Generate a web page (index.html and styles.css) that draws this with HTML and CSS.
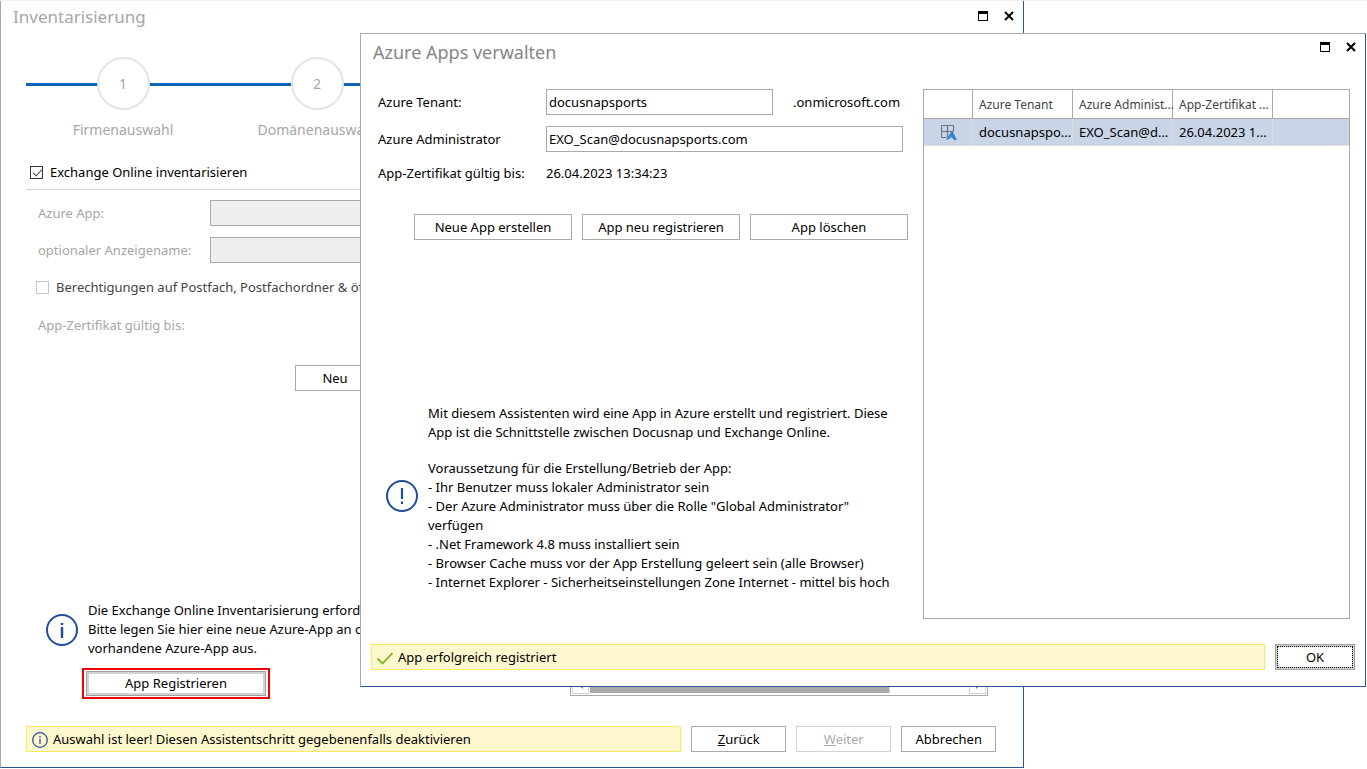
FILE: index.html
```html
<!DOCTYPE html>
<html lang="de">
<head>
<meta charset="utf-8">
<title>Inventarisierung</title>
<link rel="stylesheet" href="styles.css">
</head>
<body>
<main class="desktop">
  <section class="window wizard">
    <header class="titlebar">
      <h1 class="title title-inactive">Inventarisierung</h1>
      <button class="winbtn" aria-label="Maximieren"><svg width="10" height="10" viewBox="0 0 10 10" shape-rendering="crispEdges"><path d="M0 0h10v10H0zM1 3v6h8V3z" fill="#000" fill-rule="evenodd"/></svg></button>
      <button class="winbtn" aria-label="Schließen"><svg width="10" height="10" viewBox="0 0 10 10"><path d="M1 1l8 8M9 1l-8 8" stroke="#000" stroke-width="2"/></svg></button>
    </header>
    <div class="wizard-body">
      <ol class="steps">
        <li class="step"><span class="circle">1</span><span class="step-label">Firmenauswahl</span></li>
        <li class="step"><span class="circle">2</span><span class="step-label">Domänenauswahl</span></li>
      </ol>
      <label class="check main-check"><input type="checkbox" class="box" checked>Exchange Online inventarisieren</label>
      <div class="columns">
        <div class="left">
          <div class="field"><label class="muted" for="app">Azure App:</label><input id="app" class="text" disabled></div>
          <div class="field"><label class="muted" for="name">optionaler Anzeigename:</label><input id="name" class="text" disabled></div>
          <label class="check sub-check"><input type="checkbox" class="box box-light">Berechtigungen auf Postfach, Postfachordner &amp; öffentliche</label>
          <p class="muted cert">App-Zertifikat gültig bis:</p>
          <button class="btn new">Neu</button>
          <div class="notice">
            <svg class="notice-icon" width="32" height="32" viewBox="0 0 32 32"><circle cx="16" cy="16" r="15" fill="none" stroke="#1f4e9c" stroke-width="2"/><path d="M16 13v11M16 9v2" stroke="#1f4e9c" stroke-width="2.4"/></svg>
            <p class="notice-text">Die Exchange Online Inventarisierung erfordert<br>Bitte legen Sie hier eine neue Azure-App an oder<br>vorhandene Azure-App aus.</p>
          </div>
          <div class="marker"><button class="btn btn-default">App Registrieren</button></div>
        </div>
        <div class="panel">
          <div class="scrollbar">
            <span class="arrow"><svg width="6" height="8" viewBox="0 0 6 8"><path d="M5 0v8L0 4z" fill="#8a8a8a"/></svg></span>
            <span class="track"><span class="thumb"></span></span>
            <span class="arrow"><svg width="6" height="8" viewBox="0 0 6 8"><path d="M1 0v8l5-4z" fill="#8a8a8a"/></svg></span>
          </div>
        </div>
      </div>
      <footer class="footer">
        <p class="status"><svg width="16" height="16" viewBox="0 0 16 16"><circle cx="8" cy="8" r="7.3" fill="none" stroke="#2b579a" stroke-width="1.3"/><path d="M8 6.5V12M8 4v1.4" stroke="#2b579a" stroke-width="1.3"/></svg>Auswahl ist leer! Diesen Assistentschritt gegebenenfalls deaktivieren</p>
        <button class="btn nav"><u>Z</u>urück</button>
        <button class="btn nav" disabled><u>W</u>eiter</button>
        <button class="btn nav">Abbrechen</button>
      </footer>
    </div>
  </section>

  <section class="window dialog">
    <header class="titlebar">
      <h2 class="title">Azure Apps verwalten</h2>
      <button class="winbtn" aria-label="Maximieren"><svg width="10" height="10" viewBox="0 0 10 10" shape-rendering="crispEdges"><path d="M0 0h10v10H0zM1 3v6h8V3z" fill="#000" fill-rule="evenodd"/></svg></button>
      <button class="winbtn" aria-label="Schließen"><svg width="10" height="10" viewBox="0 0 10 10"><path d="M1 1l8 8M9 1l-8 8" stroke="#000" stroke-width="2"/></svg></button>
    </header>
    <div class="dialog-body">
      <div class="form">
        <div class="field"><label for="tenant">Azure Tenant:</label><input id="tenant" class="text tenant" value="docusnapsports"><span class="suffix">.onmicrosoft.com</span></div>
        <div class="field"><label for="admin">Azure Administrator</label><input id="admin" class="text admin" value="EXO_Scan@docusnapsports.com"></div>
        <div class="field"><span class="name">App-Zertifikat gültig bis:</span><span>26.04.2023 13:34:23</span></div>
        <div class="actions">
          <button class="btn">Neue App erstellen</button>
          <button class="btn">App neu registrieren</button>
          <button class="btn">App löschen</button>
        </div>
        <div class="info">
          <svg class="info-icon" width="32" height="32" viewBox="0 0 32 32"><circle cx="16" cy="16" r="15" fill="none" stroke="#1f4e9c" stroke-width="2"/><path d="M16 8v11M16 21.500v2.500" stroke="#1f4e9c" stroke-width="2.200"/></svg>
          <div class="info-text">
            <p>Mit diesem Assistenten wird eine App in Azure erstellt und registriert. Diese<br>App ist die Schnittstelle zwischen Docusnap und Exchange Online.</p>
            <p>Voraussetzung für die Erstellung/Betrieb der App:<br>- Ihr Benutzer muss lokaler Administrator sein<br>- Der Azure Administrator muss über die Rolle "Global Administrator"<br>verfügen<br>- .Net Framework 4.8 muss installiert sein<br>- Browser Cache muss vor der App Erstellung geleert sein (alle Browser)<br>- Internet Explorer - Sicherheitseinstellungen Zone Internet - mittel bis hoch</p>
          </div>
        </div>
      </div>
      <div class="list">
        <table class="apps">
          <colgroup><col class="c-icon"><col class="c-data"><col class="c-data"><col class="c-data"><col></colgroup>
          <thead><tr><th></th><th>Azure Tenant</th><th title="Azure Administrator">Azure Administ...</th><th title="App-Zertifikat gültig bis">App-Zertifikat ...</th><th></th></tr></thead>
          <tbody><tr><td class="icon"><svg width="16" height="16" viewBox="0 0 16 16"><path d="M5.500 13.500h-5v-12h12v6M6.500 1.500v12M.5 7.500h12" fill="none" stroke="#6f7681" stroke-width="1.200"/><path d="M10 8h2l4 8h-3l-2.500-3-2.500 2-3 1z" fill="#2f86d0"/></svg></td><td title="docusnapsports">docusnapspo...</td><td title="EXO_Scan@docusnapsports.com">EXO_Scan@d...</td><td title="26.04.2023 13:34:23">26.04.2023 1...</td><td></td></tr></tbody>
        </table>
      </div>
    </div>
    <footer class="footer dialog-footer">
      <p class="status"><svg width="16" height="16" viewBox="0 0 16 16"><path d="M.5 8.500l5 5L15.500 3" fill="none" stroke="#7cb518" stroke-width="1.800"/></svg>App erfolgreich registriert</p>
      <button class="btn btn-default ok">OK</button>
    </footer>
  </section>
</main>
</body>
</html>
```
FILE: styles.css
```css
* { box-sizing: border-box; }
body, h1, h2, p, ol { margin: 0; padding: 0; }
body {
  font: 13px/19px "Noto Sans", "Open Sans", sans-serif;
  color: #000;
  background: #fff;
}
button, input { font: inherit; color: inherit; }
.desktop {
  position: relative;
  height: 100vh;
  overflow: hidden;
  border-top: 1px solid #f0f0f0;
}

/* Windows */
.window {
  position: absolute;
  display: flex;
  flex-direction: column;
  background: #fff;
  border: 1px solid #a9a9a9;
  border-right-color: #2b579a;
  border-bottom-color: #2b579a;
}
.wizard { left: 0; top: -1px; bottom: 1px; width: calc(75% - 1px); }
.dialog { left: 360px; top: 32px; right: 1px; bottom: 82px; }
.titlebar {
  display: flex;
  align-items: flex-start;
  gap: 16px;
  height: 30px;
  padding: 0 9px 0 12px;
}
.title {
  flex: 1;
  padding-top: 3px;
  font-size: 18px;
  font-weight: 400;
  line-height: 26px;
  color: #868686;
}
.title-inactive { font-size: 17px; color: #a6a6a6; }
.dialog .titlebar { height: 36px; padding-top: 2px; }
.winbtn {
  display: flex;
  margin-top: 10px;
  padding: 0;
  border: 0;
  background: none;
}
.dialog .winbtn { margin-top: 6px; }

/* Shared controls */
.btn {
  height: 26px;
  padding: 0;
  border: 1px solid #a9a9a9;
  background: #fff;
  text-align: center;
}
.btn:disabled { color: #ababab; border-color: #d2d2d2; }
.btn-default { border: 1px solid #a0a0a0; box-shadow: inset 0 0 0 2px #d2d2d2; }
.text {
  height: 26px;
  padding: 0 2px;
  border: 1px solid #a9a9a9;
  background: #fff;
}
.text:disabled { background: #efefef; }
.muted { color: #a6a6a6; }
.check { display: flex; align-items: center; gap: 7px; }
.box {
  appearance: none;
  width: 13px;
  height: 13px;
  margin: 0;
  border: 1px solid #333;
  background: #fff;
}
.box:checked::after {
  content: "";
  display: block;
  width: 4px;
  height: 8px;
  margin: 0 0 0 4px;
  border: solid #444;
  border-width: 0 1px 1px 0;
  transform: rotate(42deg);
}
.box-light { border-color: #c6c6c6; }
.footer { display: flex; gap: 10px; }
.status {
  flex: 1;
  display: flex;
  align-items: center;
  gap: 5px;
  height: 26px;
  padding: 1px 5px 0;
  border: 1px solid #ffe766;
  background: #fdf7cd;
}

/* Wizard */
.wizard-body {
  flex: 1;
  display: flex;
  flex-direction: column;
  padding: 26px 27px 15px 25px;
}
.steps {
  display: grid;
  grid-template-columns: repeat(5, 1fr);
  list-style: none;
  background: linear-gradient(#1064b5, #1064b5) 0 26px / 100% 3px no-repeat;
}
.step { display: flex; flex-direction: column; align-items: center; gap: 10px; }
.circle {
  display: grid;
  place-items: center;
  width: 53px;
  height: 53px;
  border: 2px solid #e4e4e4;
  border-radius: 50%;
  background: #fff;
  font-size: 14px;
  color: #a6a6a6;
}
.step-label { font-size: 14px; line-height: 20px; color: #a6a6a6; }
.main-check { padding: 23px 0 7px 4px; border-bottom: 1px solid #d8d8d8; }
.columns { flex: 1; display: flex; }
.left {
  flex: 1;
  display: flex;
  flex-direction: column;
  align-items: flex-start;
  min-width: 0;
  padding: 10px 0 0 12px;
}
.left .field {
  display: grid;
  grid-template-columns: 172px 300px;
  align-items: center;
  margin-bottom: 11px;
}
.sub-check { padding: 4px 0 0; margin-left: -2px; white-space: nowrap; color: #444; }
.cert { padding-top: 19px; }
.new { width: 80px; margin: 30px 0 0 257px; }
.notice { display: flex; align-items: center; gap: 10px; margin: auto 0 10px 8px; }
.notice-text { white-space: nowrap; }
.marker {
  display: flex;
  margin: 0 0 0 44px;
  padding: 1px 2px;
  border: 2px solid #f00000;
}
.marker .btn { width: 180px; height: 25px; }
.panel {
  display: flex;
  align-items: flex-end;
  width: 418px;
  margin: 10px 8px 3px 0;
  padding: 1px;
  border: 1px solid #a9a9a9;
}
.scrollbar { flex: 1; display: flex; height: 18px; }
.arrow {
  display: grid;
  place-items: center;
  width: 17px;
  border: 1px solid #d2d2d2;
}
.track { flex: 1; }
.thumb {
  display: block;
  width: 79%;
  height: 17px;
  margin-left: 1px;
  background: #a9a9a9;
  border-right: 1px solid #d2d2d2;
}
.wizard .footer { margin-top: 27px; }
.nav { width: 95px; }

/* Dialog */
.dialog-body {
  flex: 1;
  display: flex;
  gap: 15px;
  padding: 19px 15px 25px 17px;
}
.form { flex: 1; display: flex; flex-direction: column; min-width: 0; }
.form .field { display: flex; align-items: center; min-height: 26px; margin-bottom: 11px; }
.form .field label, .name { width: 168px; }
.form .field:nth-child(3) { margin-bottom: 0; margin-top: -3px; }
.tenant { width: 227px; }
.admin { width: 357px; }
.suffix { margin-left: 20px; }
.actions { display: flex; gap: 10px; margin: 28px 0 auto 36px; }
.actions .btn { width: 158px; }
.info { display: flex; align-items: center; gap: 10px; margin: 0 0 27px 8px; }
.info-icon { margin-bottom: 4px; }
.info-text { white-space: nowrap; }
.info-text p + p { margin-top: 17px; }
.list { width: 427px; border: 1px solid #a9a9a9; }
.apps { width: 100%; table-layout: fixed; border-collapse: separate; border-spacing: 0; }
.c-icon { width: 49px; }
.c-data { width: 100px; }
.apps th, .apps td {
  padding: 0 0 0 6px;
  text-align: left;
  font-weight: 400;
  white-space: nowrap;
  border-right: 1px solid #a9a9a9;
}
.apps th { height: 29px; font-size: 12px; color: #444; border-bottom: 1px solid #a9a9a9; }
.apps td { height: 27px; background: #c9d5e6; border-right-color: #dcdcdc; border-bottom: 1px solid #e0e0e0; }
.apps th:last-child, .apps td:last-child { border-right: 0; }
.apps .icon { padding: 0 0 0 17px; }
.apps svg { display: block; }
.dialog-footer { padding: 0 10px 16px; }
.ok { width: 80px; outline: 1px dotted #000; outline-offset: -3px; }
```
